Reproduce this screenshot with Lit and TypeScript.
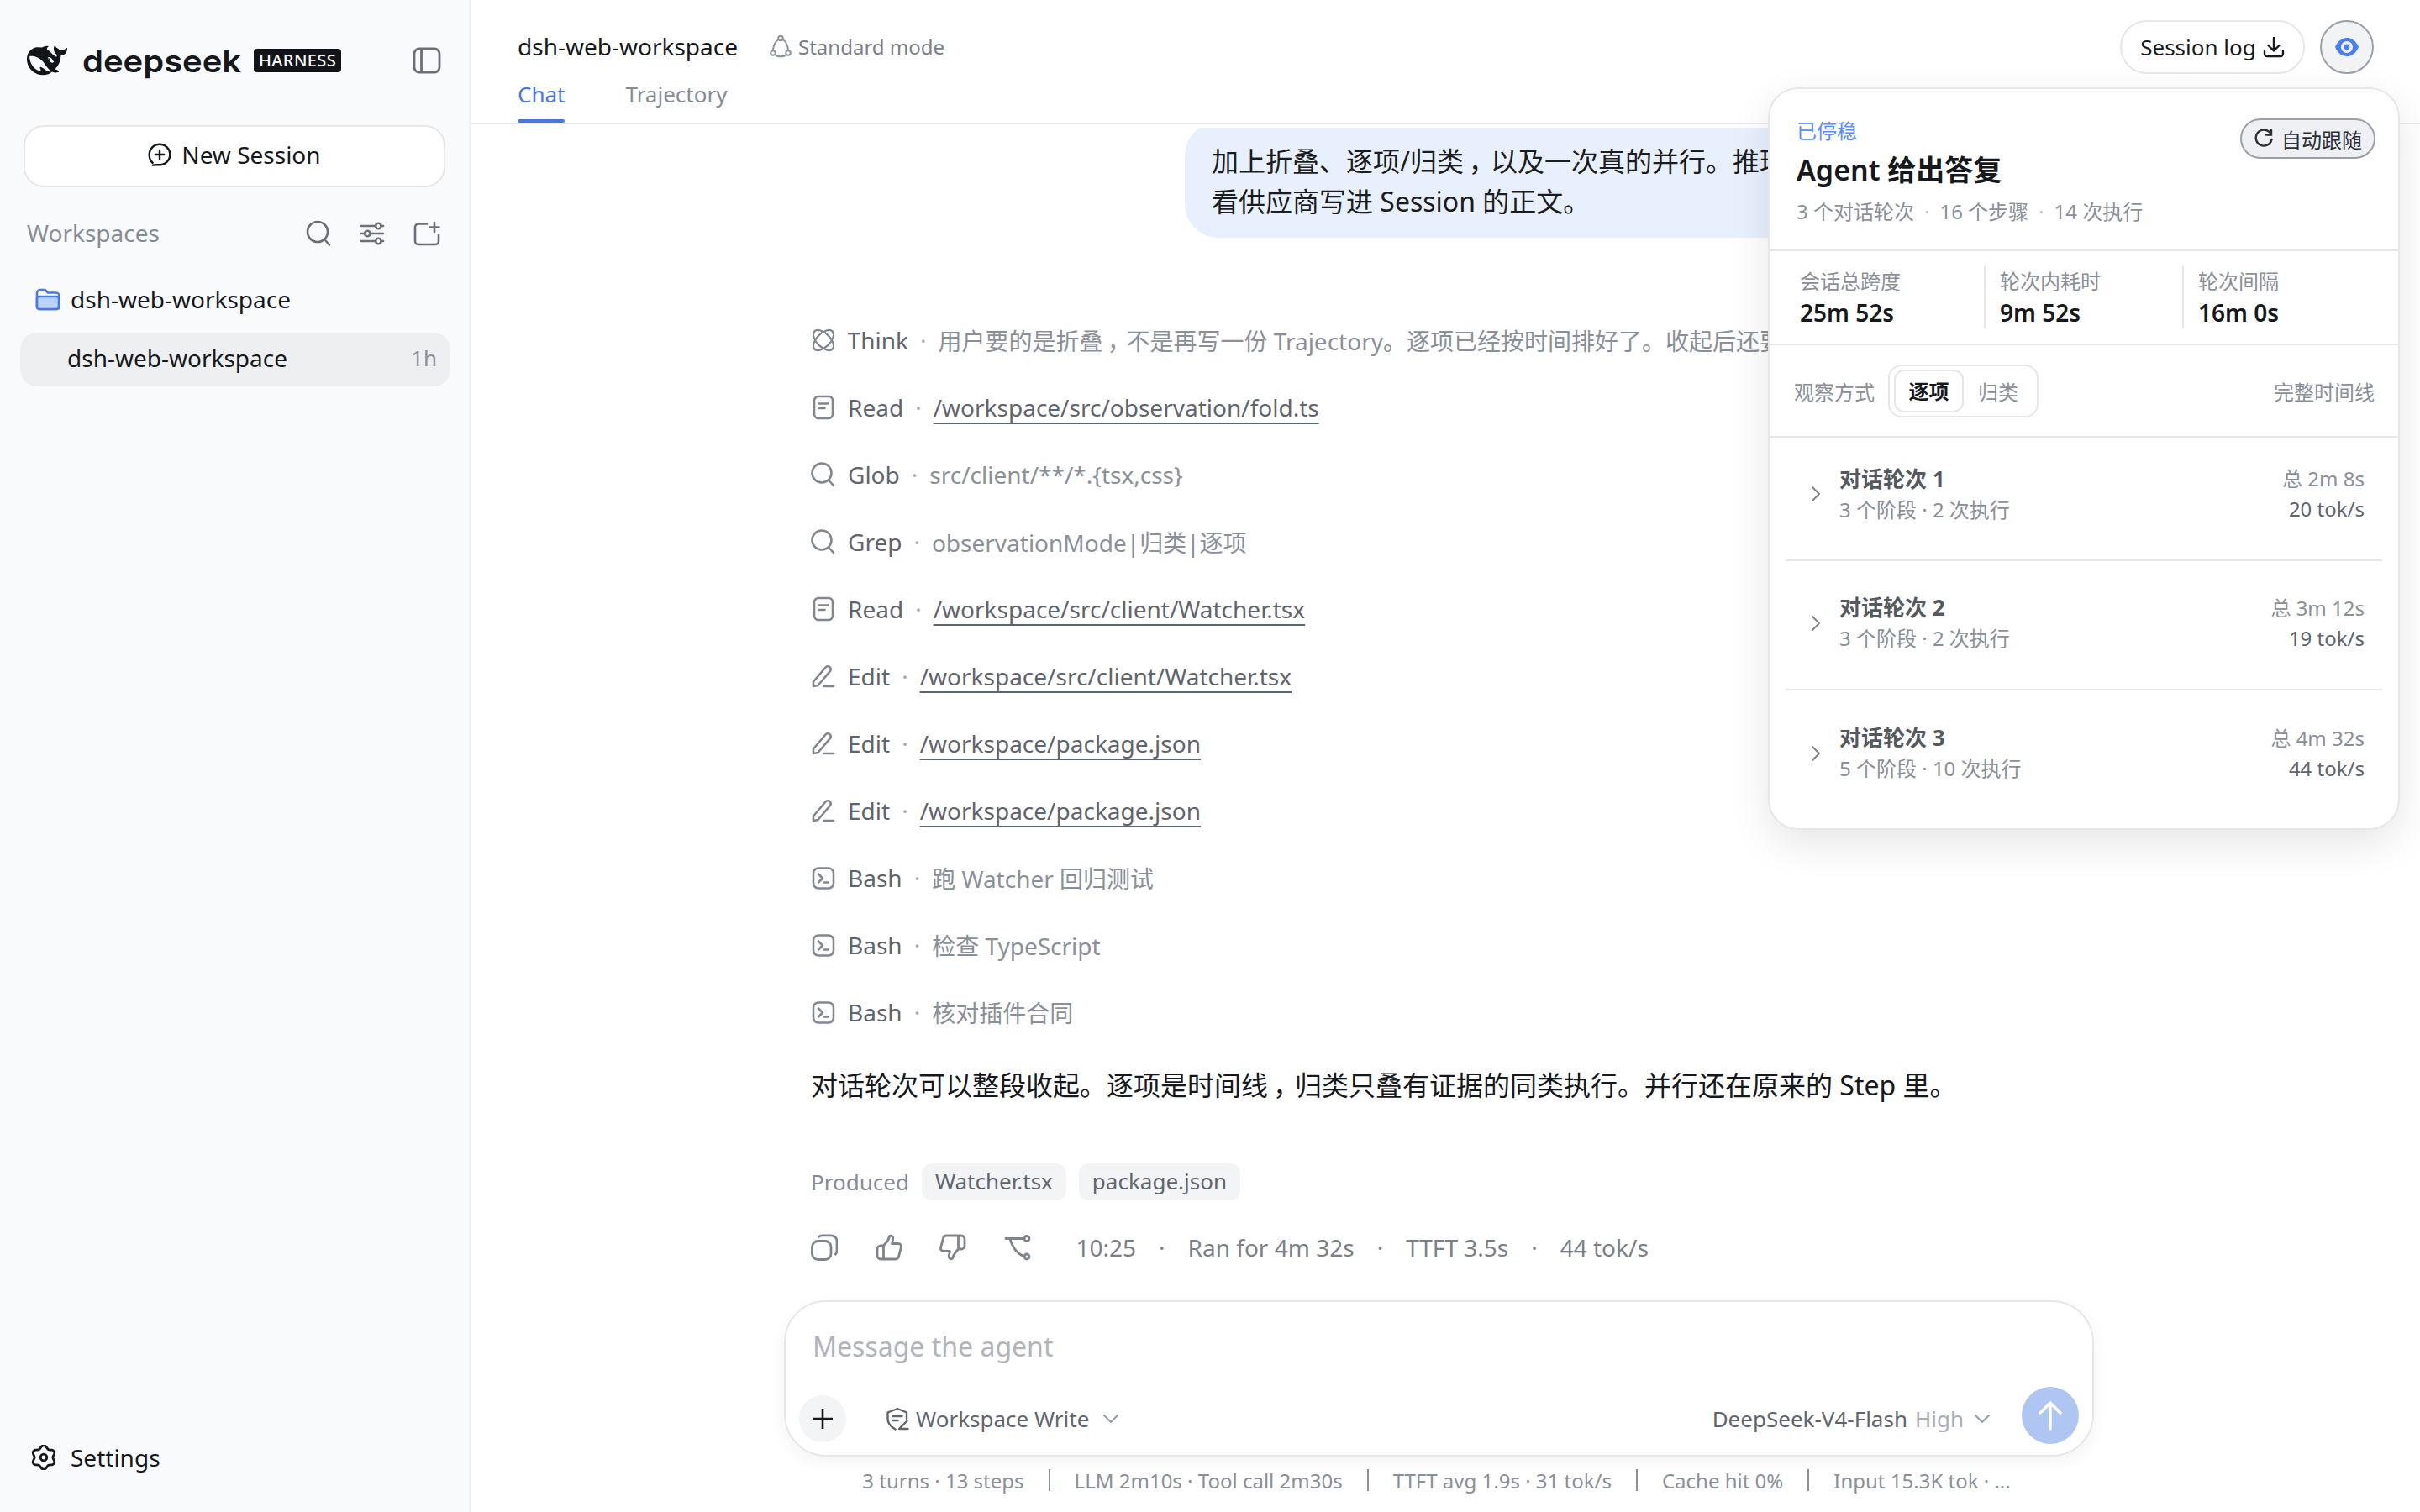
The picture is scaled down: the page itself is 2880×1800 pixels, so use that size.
import { LitElement, html, css, svg } from "lit";
import { customElement } from "lit/decorators.js";

const thumb = "M9.5 14L14 8.500C15.500 6.500 16 4 16.500 2.800 19 1 21.500 3.500 20.500 7L19.500 11.500H27a3.500 3.500 0 0 1 3.400 4.400L27.500 27a4 4 0 0 1-4 3H6a4 4 0 0 1-4-4v-8a4 4 0 0 1 4-4H9.500zM9.500 15v15";

const flower = (() => {
  const pts: string[] = [];
  for (let i = 0; i < 120; i++) {
    const th = (i / 120) * Math.PI * 2;
    const r = 12.6 + 1.7 * Math.cos(6 * th);
    pts.push(`${(15 + r * Math.sin(th)).toFixed(2)},${(15 - r * Math.cos(th)).toFixed(2)}`);
  }
  return pts.join(" ");
})();

const ic = {
  whale: html`<svg class="whale" viewBox="0 0 24 24" fill="#111418"><path d="M23.748 4.482c-.254-.124-.364.113-.512.234-.051.039-.094.09-.137.136-.372.397-.806.657-1.373.626-.829-.046-1.537.214-2.163.848-.133-.782-.575-1.248-1.247-1.548-.352-.156-.708-.311-.955-.65-.172-.241-.219-.51-.305-.774-.055-.16-.11-.323-.293-.35-.2-.031-.278.136-.356.276-.313.572-.434 1.202-.422 1.84.027 1.436.633 2.58 1.838 3.393.137.093.172.187.129.323-.082.28-.18.552-.266.833-.055.179-.137.217-.329.14a5.526 5.526 0 01-1.736-1.18c-.857-.828-1.631-1.742-2.597-2.458a11.365 11.365 0 00-.689-.471c-.985-.957.13-1.743.388-1.836.27-.098.093-.432-.779-.428-.872.004-1.67.295-2.687.684a3.055 3.055 0 01-.465.137 9.597 9.597 0 00-2.883-.102c-1.885.21-3.39 1.102-4.497 2.623C.082 8.606-.231 10.684.152 12.85c.403 2.284 1.569 4.175 3.36 5.653 1.858 1.533 3.997 2.284 6.438 2.14 1.482-.085 3.133-.284 4.994-1.86.47.234.962.327 1.78.397.63.059 1.236-.03 1.705-.128.735-.156.684-.837.419-.961-2.155-1.004-1.682-.595-2.113-.926 1.096-1.296 2.746-2.642 3.392-7.003.05-.347.007-.565 0-.845-.004-.17.035-.237.23-.256a4.173 4.173 0 001.545-.475c1.396-.763 1.96-2.015 2.093-3.517.02-.23-.004-.467-.247-.588zM11.581 18c-2.089-1.642-3.102-2.183-3.52-2.16-.392.024-.321.471-.235.763.09.288.207.486.371.739.114.167.192.416-.113.603-.673.416-1.842-.14-1.897-.167-1.361-.802-2.5-1.86-3.301-3.307-.774-1.393-1.224-2.887-1.298-4.482-.02-.386.093-.522.477-.592a4.696 4.696 0 011.529-.039c2.132.312 3.946 1.265 5.468 2.774.868.86 1.525 1.887 2.202 2.891.72 1.066 1.494 2.082 2.48 2.914.348.292.625.514.891.677-.802.09-2.14.11-3.054-.614zm1-6.44a.306.306 0 01.415-.287.302.302 0 01.2.288.306.306 0 01-.31.307.303.303 0 01-.304-.308zm3.11 1.596c-.2.081-.399.151-.59.16a1.245 1.245 0 01-.798-.254c-.274-.23-.47-.358-.552-.758a1.73 1.73 0 01.016-.588c.07-.327-.008-.537-.239-.727-.187-.156-.426-.199-.688-.199a.559.559 0 01-.254-.078c-.11-.054-.2-.19-.114-.358.028-.054.16-.186.192-.21.356-.202.767-.136 1.146.016.352.144.618.408 1.001.782.391.451.462.576.685.914.176.265.336.537.445.848.067.195-.019.354-.25.452z"/></svg>`,
  panel: html`<svg width="34" height="32" viewBox="0 0 34 32" fill="none" stroke="#6b7078" stroke-width="2.800"><rect x="2" y="2" width="30" height="28" rx="6"/><path d="M10.500 2v28"/></svg>`,
  newChat: html`<svg width="28" height="30" viewBox="0 0 30 32" fill="none" stroke="#15181c" stroke-width="2.600" stroke-linecap="round"><path d="M6 26.500C3 24 1.800 20 1.800 16 1.800 8.700 7.700 2.800 15 2.800S28.200 8.700 28.200 16 22.300 29.200 15 29.200c-2.800 0-5.200-.5-9 .3"/><path d="M15 10.500v11M9.500 16h11"/></svg>`,
  search: html`<svg width="30" height="32" viewBox="0 0 30 32" fill="none" stroke="#6b7078" stroke-width="2.600" stroke-linecap="round"><circle cx="14" cy="14" r="12"/><path d="M23.500 24.500l4.500 5"/></svg>`,
  sliders: html`<svg width="30" height="30" viewBox="0 0 30 30" fill="none" stroke="#6b7078" stroke-width="2.600" stroke-linecap="round"><path d="M2 6h17M25.500 6H28M2 15h4M12.500 15H28M2 24h17M25.500 24H28"/><circle cx="22.300" cy="6" r="3.200"/><circle cx="9.300" cy="15" r="3.200"/><circle cx="22.300" cy="24" r="3.200"/></svg>`,
  newFolder: html`<svg width="32" height="30" viewBox="0 0 32 30" fill="none" stroke="#6b7078" stroke-width="2.600" stroke-linecap="round"><path d="M16 3.500H6a4 4 0 0 0-4 4V24a4 4 0 0 0 4 4h20a4 4 0 0 0 4-4v-7"/><path d="M25 2v11M19.500 7.500h11"/></svg>`,
  folder: html`<svg width="30" height="30" viewBox="0 0 30 30" fill="none" stroke="#4a78e6" stroke-width="2.600" stroke-linejoin="round"><path d="M2 8a4 4 0 0 1 4-4h5.500l3.500 3.500h9.500a4 4 0 0 1 4 4V24a3 3 0 0 1-3 3H5a3 3 0 0 1-3-3z" fill="#fff"/><path d="M2 14.500a2.500 2.500 0 0 1 2.500-2.500h21a2.500 2.500 0 0 1 2.500 2.500V24a3 3 0 0 1-3 3H5a3 3 0 0 1-3-3z" fill="#bcd2f8"/></svg>`,
  settings: html`<svg width="30" height="30" viewBox="0 0 30 30" fill="none" stroke="#15181c" stroke-width="2.800" stroke-linejoin="round">${svg`<polygon points="${flower}"/>`}<circle cx="15" cy="15" r="3.800"/></svg>`,
  recycle: html`<svg width="26" height="28" viewBox="0 0 26 28" fill="none" stroke="#8f949b" stroke-width="2" stroke-linecap="round"><path d="M10.500 6C7.500 8 4.500 13 4 18M15.500 6c3 2 6 7 6.500 12M8 25.500c3 1 7 1 10 0"/><circle cx="13" cy="4.500" r="2.800"/><circle cx="4" cy="22" r="2.800"/><circle cx="22" cy="22" r="2.800"/></svg>`,
  download: html`<svg width="26" height="26" viewBox="0 0 26 26" fill="none" stroke="#15181c" stroke-width="2.400" stroke-linecap="round" stroke-linejoin="round"><path d="M13 2v15M6.500 11l6.500 6.500 6.500-6.500M2 18v3a3 3 0 0 0 3 3h16a3 3 0 0 0 3-3v-3"/></svg>`,
  eye: html`<svg width="30" height="30" viewBox="0 0 30 30" fill="none"><path d="M1 15c3-7 8-11 14-11s11 4 14 11c-3 7-8 11-14 11S4 22 1 15z" fill="#4a7ff0"/><circle cx="15" cy="15" r="7" fill="#eef1f5"/><circle cx="15" cy="15" r="3.400" fill="#4a7ff0"/></svg>`,
  refresh: html`<svg width="22" height="24" viewBox="0 0 22 24" fill="none" stroke="#2b2f35" stroke-width="2.400" stroke-linecap="round"><path d="M19.500 6.500A9.500 9.500 0 1 0 20.500 13"/><path d="M20 1.500v6h-6"/></svg>`,
  chev: html`<svg width="12" height="20" viewBox="0 0 12 20" fill="none" stroke="#7d838b" stroke-width="2" stroke-linecap="round" stroke-linejoin="round"><path d="M2 2l8 8-8 8"/></svg>`,
  think: html`<svg width="28" height="28" viewBox="0 0 28 28" fill="none" stroke="#82878f" stroke-width="2.300"><ellipse cx="14" cy="14" rx="15" ry="8" transform="rotate(45 14 14)"/><ellipse cx="14" cy="14" rx="15" ry="8" transform="rotate(-45 14 14)"/></svg>`,
  doc: html`<svg width="28" height="30" viewBox="0 0 28 30" fill="none" stroke="#82878f" stroke-width="2.600" stroke-linecap="round"><rect x="3" y="2" width="22" height="26" rx="5"/><path d="M8.500 10.500h11M8.500 16h7"/></svg>`,
  glass: html`<svg width="30" height="30" viewBox="0 0 30 30" fill="none" stroke="#82878f" stroke-width="2.600" stroke-linecap="round"><circle cx="13" cy="13" r="11.500"/><path d="M22 22.500l5 5.500"/></svg>`,
  edit: html`<svg width="28" height="28" viewBox="0 0 28 28" fill="none" stroke="#82878f" stroke-width="2.600" stroke-linecap="round" stroke-linejoin="round"><path d="M2 20.500L16.500 3.500a3.500 3.500 0 0 1 5-.3 3.500 3.500 0 0 1 .3 5L7.500 25 2 26z"/><path d="M15 26h11"/></svg>`,
  bash: html`<svg width="28" height="28" viewBox="0 0 28 28" fill="none" stroke="#82878f" stroke-width="2.600" stroke-linecap="round" stroke-linejoin="round"><rect x="2" y="2.500" width="24" height="24" rx="6"/><path d="M8 9.500l5 5-5 5M15 19.500h5"/></svg>`,
  copy: html`<svg width="32" height="32" viewBox="0 0 32 32" fill="none" stroke="#7f848c" stroke-width="2.800" stroke-linejoin="round"><rect x="1.500" y="8.500" width="22.500" height="22" rx="7"/><path d="M8.500 4C9.800 2.600 11.500 1.800 13.500 1.800H24a7 7 0 0 1 7 7V20c0 2-1 3.800-2.500 5"/></svg>`,
  up: html`<svg width="32" height="32" viewBox="0 0 32 32" fill="none" stroke="#7f848c" stroke-width="2.800" stroke-linejoin="round" stroke-linecap="round"><path d="${thumb}"/></svg>`,
  down: html`<svg width="32" height="32" viewBox="0 0 32 32" fill="none" stroke="#7f848c" stroke-width="2.800" stroke-linejoin="round" stroke-linecap="round"><path transform="rotate(180 16 16)" d="${thumb}"/></svg>`,
  branch: html`<svg width="32" height="32" viewBox="0 0 32 32" fill="none" stroke="#7f848c" stroke-width="2.800" stroke-linecap="round" stroke-linejoin="round"><path d="M2 5.500h22M7 6c2 8 8 18 17 20.500"/><circle cx="27" cy="5.500" r="3"/><circle cx="27" cy="27" r="3"/></svg>`,
  plus: html`<svg width="24" height="24" viewBox="0 0 24 24" fill="none" stroke="#15181c" stroke-width="2.600"><path d="M12 0v24M0 12h24"/></svg>`,
  shield: html`<svg width="28" height="28" viewBox="0 0 28 28" fill="none" stroke="#5f656d" stroke-width="2.400" stroke-linecap="round" stroke-linejoin="round"><path d="M25 14V6.500L14 2 2.500 6.500V14C2.500 20 7 24 11.500 26.500"/><path d="M8.500 11h11M8.500 16h6M25.500 16.500l-9.500 9.500h10.500"/></svg>`,
  chevD: html`<svg width="20" height="12" viewBox="0 0 20 12" fill="none" stroke="#9aa0a8" stroke-width="2.200" stroke-linecap="round" stroke-linejoin="round"><path d="M2 2l8 8 8-8"/></svg>`,
  arrow: html`<svg width="28" height="36" viewBox="0 0 28 36" fill="none" stroke="#fff" stroke-width="3.400" stroke-linecap="round" stroke-linejoin="round"><path d="M14 34V3M2 15L14 3l12 12"/></svg>`,
};

const comma = html`<span class="cm">，</span>`;

const steps: { icon: any; name: string; detail: any; link?: boolean }[] = [
  { icon: ic.think, name: "Think", detail: html`用户要的是折叠${comma}不是再写一份 Trajectory。逐项已经按时间排好了。收起后还要保留每一轮的摘要与结论。` },
  { icon: ic.doc, name: "Read", detail: "/workspace/src/observation/fold.ts", link: true },
  { icon: ic.glass, name: "Glob", detail: "src/client/**/*.{tsx,css}" },
  { icon: ic.glass, name: "Grep", detail: "observationMode|归类|逐项" },
  { icon: ic.doc, name: "Read", detail: "/workspace/src/client/Watcher.tsx", link: true },
  { icon: ic.edit, name: "Edit", detail: "/workspace/src/client/Watcher.tsx", link: true },
  { icon: ic.edit, name: "Edit", detail: "/workspace/package.json", link: true },
  { icon: ic.edit, name: "Edit", detail: "/workspace/package.json", link: true },
  { icon: ic.bash, name: "Bash", detail: "跑 Watcher 回归测试" },
  { icon: ic.bash, name: "Bash", detail: "检查 TypeScript" },
  { icon: ic.bash, name: "Bash", detail: "核对插件合同" },
];

const turns = [
  { t: "对话轮次 1", s: "3 个阶段 · 2 次执行", a: "总 2m 8s", b: "20 tok/s" },
  { t: "对话轮次 2", s: "3 个阶段 · 2 次执行", a: "总 3m 12s", b: "19 tok/s" },
  { t: "对话轮次 3", s: "5 个阶段 · 10 次执行", a: "总 4m 32s", b: "44 tok/s" },
];

@customElement("app-root")
export class AppRoot extends LitElement {
  static styles = css`
    :host { display: block; height: 1800px; width: 2880px; overflow: hidden; background: #fff; color: #15181c;
      font-family: "Noto Sans", "Noto Sans CJK SC", sans-serif; font-size: 28px; }
    * { box-sizing: border-box; }
    svg { display: block; flex: none; }
    .cm { font-feature-settings: "palt"; padding: 0 .25em; }
    .app { display: flex; height: 100%; }

    .side { width: 560px; flex: none; background: #f9fafc; border-right: 2px solid #f1f2f4; display: flex; flex-direction: column; padding: 0 22px 0 24px; }
    .brand { display: flex; align-items: center; height: 146px; padding: 0 11px 2px 8px; }
    .whale { width: 48px; height: 48px; }
    .wordmark { display: inline-block; font-family: Inter, sans-serif; font-weight: 600; font-size: 37px; margin: 0 14px 0 18px; color: #15181c; line-height: 1; transform: scaleX(1.08); transform-origin: left center; }
    .badge { background: #111418; color: #fff; font-size: 20px; font-weight: 500; letter-spacing: 0.400px; height: 28px; line-height: 28px; width: 104px; text-align: center; border-radius: 4px; margin-left: 15px; }
    .panel-btn { margin-left: auto; }
    .new { height: 74px; margin: 3px 6px 0 4px; border: 2px solid #e6e7e9; border-radius: 24px; background: #fff; display: flex; align-items: center; justify-content: center; gap: 12px; font-size: 28px; padding-bottom: 4px; }
    .ws-head { display: flex; align-items: center; height: 64px; margin-top: 23px; padding: 0 12px 2px 8px; color: #868c95; font-size: 28px; }
    .ws-head .tools { margin-left: auto; display: flex; align-items: center; gap: 34px; padding-top: 2px; }
    .folder-row { display: flex; align-items: center; gap: 12px; height: 60px; margin-top: 16px; padding-left: 18px; font-size: 28px; }
    .session { display: flex; align-items: center; justify-content: space-between; height: 64px; margin-top: 10px; border-radius: 20px; background: #eeeff1; padding: 0 16px 4px 56px; font-size: 28px; }
    .session small { font-size: 26px; color: #8a9099; }
    .settings { margin-top: auto; display: flex; align-items: center; gap: 17px; height: 60px; margin-bottom: 35px; padding-left: 13px; font-size: 28px; }

    .main { flex: 1; min-width: 0; display: flex; flex-direction: column; position: relative; }
    .head { height: 148px; flex: none; border-bottom: 2px solid #e6e7e9; padding: 24px 55px 0 56px; display: flex; justify-content: space-between; }
    .title-row { display: flex; align-items: center; height: 62px; }
    .title { font-size: 28px; }
    .mode { display: flex; align-items: center; gap: 8px; margin-left: 38px; color: #7b8088; font-size: 24px; }
    .tabs { display: flex; gap: 72px; }
    .tab { font-size: 26px; color: #868c95; height: 60px; line-height: 52px; position: relative; }
    .tab.on { color: #4a75e8; }
    .tab.on::after { content: ""; position: absolute; left: 0; right: 0; bottom: 0; height: 4px; border-radius: 2px; background: #4a75e8; }
    .actions { display: flex; gap: 18px; align-items: flex-start; }
    .log { height: 64px; width: 220px; border: 2px solid #e6e7e9; border-radius: 32px; display: flex; align-items: center; justify-content: center; gap: 8px; font-size: 26px; }
    .eye { width: 64px; height: 64px; border-radius: 50%; background: #f1f3f5; border: 2px solid #9aa0aa; display: flex; align-items: center; justify-content: center; }

    .scroll { flex: 1; min-height: 0; overflow: hidden; margin-top: 4px; padding-left: 405px; }
    .col { width: 1493px; display: flex; flex-direction: column; }
    .bubble { align-self: flex-end; width: 1048px; margin-top: -7px; background: #e9f0fd; border-radius: 40px; padding: 23px 32px 19px; font-size: 32px; line-height: 48px; white-space: nowrap; overflow: hidden; color: #1a1c20; }
    .steps { margin-top: 83px; display: flex; flex-direction: column; }
    .step { height: 80px; display: flex; align-items: center; font-size: 28px; white-space: nowrap; color: #5f656e; padding-bottom: 3px; }
    .step .ico { width: 30px; display: flex; justify-content: center; margin-right: 14px; overflow: visible; }
    .sep { margin: 0 14px; color: #a4a9b0; }
    .det { color: #8a9099; }
    .det.link { color: #5f656e; text-decoration: underline; text-decoration-thickness: 2px; text-underline-offset: 7px; }
    .answer { margin-top: 22px; font-size: 32px; line-height: 48px; color: #15181c; white-space: nowrap; }
    .prod { margin-top: 69px; height: 44px; display: flex; align-items: center; gap: 15px; font-size: 26px; color: #868c95; }
    .chip { height: 44px; line-height: 42px; border-radius: 12px; background: #f3f4f6; padding: 0 16px; color: #5f656e; }
    .acts { margin-top: 32px; height: 48px; display: flex; align-items: center; color: #7b8088; font-size: 28px; white-space: nowrap; }
    .acts .icons { display: flex; gap: 44.500px; margin-right: 54px; }
    .acts .d { margin: 0 27px; }

    .foot { flex: none; padding-left: 373px; padding-bottom: 12px; }
    .composer { width: 1559px; height: 186px; border: 2px solid #e6e7e9; border-radius: 50px; background: #fff; box-shadow: 0 6px 20px rgba(0,0,0,.05); padding: 0 16px 0 16px; display: flex; flex-direction: column; }
    .ph { height: 108px; line-height: 106px; font-size: 32px; color: #b0b5bc; padding-left: 16px; }
    .bar { display: flex; align-items: center; }
    .add { width: 56px; height: 56px; border-radius: 50%; background: #f3f4f6; display: flex; align-items: center; justify-content: center; }
    .perm { display: flex; align-items: center; gap: 8px; margin-left: 47px; font-size: 26px; color: #5f656e; }
    .perm svg:last-child { margin-left: 8px; }
    .model { margin-left: auto; display: flex; align-items: center; font-size: 26px; color: #5f656e; }
    .model em { font-style: normal; color: #a9aeb5; margin-left: 9px; }
    .model svg { margin-left: 12px; }
    .send { width: 68px; height: 68px; border-radius: 50%; background: #b0c6f2; display: flex; align-items: center; justify-content: center; margin: -7px 0 0 37px; }
    .stats { display: flex; justify-content: center; align-items: center; height: 52px; width: 1553px; margin-top: 2px; font-size: 24px; color: #8a9099; white-space: nowrap; }
    .stats i { width: 2px; height: 26px; background: #8a9099; margin: 0 29px; }

    .pop { position: absolute; left: 1544px; top: 104px; width: 752px; height: 884px; background: #fff; border: 2px solid #e6e7e9; border-radius: 36px; box-shadow: 0 16px 48px rgba(0,0,0,.1); display: flex; flex-direction: column; }
    .p-top { height: 193px; flex: none; padding: 34px 27px 0 32px; display: flex; justify-content: space-between; border-bottom: 2px solid #e6e7e9; }
    .kicker { font-size: 24px; color: #5b8cff; line-height: 32px; }
    .p-title { font-size: 34px; font-weight: 600; line-height: 50px; margin-top: 5px; color: #15181c; }
    .p-sub { font-size: 24px; color: #8a9099; line-height: 36px; margin-top: 7px; white-space: nowrap; }
    .p-sub b { font-weight: 400; color: #c4c8cd; margin: 0 12px; }
    .follow { height: 48px; margin-top: 1px; border-radius: 24px; border: 2px solid #9aa0aa; background: #eef0f4; display: flex; align-items: center; gap: 10px; padding: 0 14px 0 15px; font-size: 24px; color: #2b2f35; }
    .p-stats { height: 112px; flex: none; display: flex; align-items: center; padding-left: 36px; border-bottom: 2px solid #e6e7e9; }
    .cell { height: 74px; display: flex; flex-direction: column; justify-content: space-between; }
    .cell + .cell { border-left: 2px solid #e6e7e9; padding-left: 17px; }
    .cell:nth-child(1) { width: 219px; } .cell:nth-child(2) { width: 236px; }
    .cell span { font-size: 24px; color: #8a9099; line-height: 36px; }
    .cell strong { font-size: 28px; font-weight: 600; line-height: 38px; color: #15181c; }
    .view { height: 110px; flex: none; display: flex; align-items: center; padding: 0 28px 0 29px; border-bottom: 2px solid #e6e7e9; font-size: 24px; color: #8a9099; }
    .seg { display: flex; align-items: center; height: 63px; width: 179px; margin-left: 16px; border: 2px solid #e6e7e9; border-radius: 16px; padding-left: 5px; }
    .seg .on { width: 83px; height: 51px; line-height: 47px; text-align: center; border: 2px solid #e6e7e9; border-radius: 12px; font-weight: 700; color: #15181c; }
    .seg .off { margin-left: 17px; }
    .view .all { margin-left: auto; }
    .turns { padding: 0 19px; flex: 1; }
    .turn { height: 154px; display: flex; align-items: center; border-bottom: 2px solid #e6e7e9; padding: 0 21px 5px 30px; }
    .turn:first-child { height: 147px; padding-bottom: 11px; }
    .turn:last-child { border-bottom: none; }
    .turn .mid { margin-left: 22px; flex: 1; }
    .turn .t { font-size: 26px; font-weight: 700; color: #54595f; line-height: 36px; }
    .turn .s { font-size: 24px; color: #8a9099; line-height: 36px; margin-top: 1px; }
    .turn .r { text-align: right; }
    .turn .a { font-size: 24px; color: #8a9099; line-height: 36px; }
    .turn .b { font-size: 24px; color: #5f656e; line-height: 36px; }
  `;

  render() {
    return html`<div class="app">
      <aside class="side">
        <div class="brand">${ic.whale}<span class="wordmark">deepseek</span><span class="badge">HARNESS</span><span class="panel-btn">${ic.panel}</span></div>
        <div class="new">${ic.newChat}<span>New Session</span></div>
        <div class="ws-head"><span>Workspaces</span><span class="tools">${ic.search}${ic.sliders}${ic.newFolder}</span></div>
        <div class="folder-row">${ic.folder}<span>dsh-web-workspace</span></div>
        <div class="session"><span>dsh-web-workspace</span><small>1h</small></div>
        <div class="settings">${ic.settings}<span>Settings</span></div>
      </aside>
      <main class="main">
        <header class="head">
          <div>
            <div class="title-row"><span class="title">dsh-web-workspace</span><span class="mode">${ic.recycle}Standard mode</span></div>
            <div class="tabs"><span class="tab on">Chat</span><span class="tab">Trajectory</span></div>
          </div>
          <div class="actions">
            <div class="log"><span>Session log</span>${ic.download}</div>
            <div class="eye">${ic.eye}</div>
          </div>
        </header>
        <div class="scroll"><div class="col">
          <div class="bubble">加上折叠、逐项/归类${comma}以及一次真的并行。推理别只<br />看供应商写进 Session 的正文。</div>
          <div class="steps">
            ${steps.map((s) => html`<div class="step"><span class="ico">${s.icon}</span><span>${s.name}</span><span class="sep">·</span><span class="det ${s.link ? "link" : ""}">${s.detail}</span></div>`)}
          </div>
          <div class="answer">对话轮次可以整段收起。逐项是时间线${comma}归类只叠有证据的同类执行。并行还在原来的 Step 里。</div>
          <div class="prod"><span>Produced</span><span class="chip">Watcher.tsx</span><span class="chip">package.json</span></div>
          <div class="acts">
            <span class="icons">${ic.copy}${ic.up}${ic.down}${ic.branch}</span>
            <span>10:25</span><span class="d">·</span><span>Ran for 4m 32s</span><span class="d">·</span><span>TTFT 3.5s</span><span class="d">·</span><span>44 tok/s</span>
          </div>
        </div></div>
        <div class="foot">
          <div class="composer">
            <div class="ph">Message the agent</div>
            <div class="bar">
              <span class="add">${ic.plus}</span>
              <span class="perm">${ic.shield}<span>Workspace Write</span>${ic.chevD}</span>
              <span class="model">DeepSeek-V4-Flash<em>High</em>${ic.chevD}</span>
              <span class="send">${ic.arrow}</span>
            </div>
          </div>
          <div class="stats"><span>3 turns · 13 steps</span><i></i><span>LLM 2m10s · Tool call 2m30s</span><i></i><span>TTFT avg 1.9s · 31 tok/s</span><i></i><span>Cache hit 0%</span><i></i><span>Input 15.3K tok · ...</span></div>
        </div>
        <section class="pop">
          <div class="p-top">
            <div>
              <div class="kicker">已停稳</div>
              <div class="p-title">Agent 给出答复</div>
              <div class="p-sub">3 个对话轮次<b>·</b>16 个步骤<b>·</b>14 次执行</div>
            </div>
            <div class="follow">${ic.refresh}<span>自动跟随</span></div>
          </div>
          <div class="p-stats">
            <div class="cell"><span>会话总跨度</span><strong>25m 52s</strong></div>
            <div class="cell"><span>轮次内耗时</span><strong>9m 52s</strong></div>
            <div class="cell"><span>轮次间隔</span><strong>16m 0s</strong></div>
          </div>
          <div class="view"><span>观察方式</span><div class="seg"><span class="on">逐项</span><span class="off">归类</span></div><span class="all">完整时间线</span></div>
          <div class="turns">
            ${turns.map((t) => html`<div class="turn">${ic.chev}<div class="mid"><div class="t">${t.t}</div><div class="s">${t.s}</div></div><div class="r"><div class="a">${t.a}</div><div class="b">${t.b}</div></div></div>`)}
          </div>
        </section>
      </main>
    </div>`;
  }
}
